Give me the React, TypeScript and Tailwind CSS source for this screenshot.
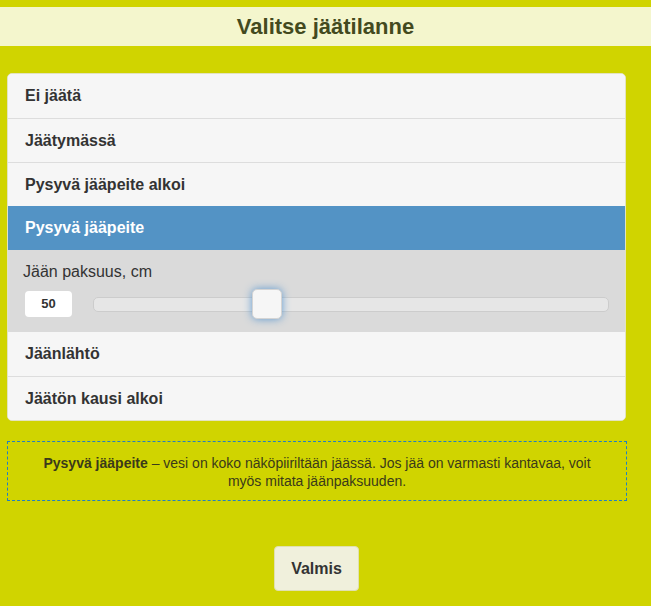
import { useState } from "react";

const options = [
  "Ei jäätä",
  "Jäätymässä",
  "Pysyvä jääpeite alkoi",
  "Pysyvä jääpeite",
  "Jäänlähtö",
  "Jäätön kausi alkoi",
];

export default function App() {
  const [selected, setSelected] = useState(3);
  const thickness = 50;

  return (
    <div className="min-h-[606px] bg-[#d0d400] pt-[7px] font-['Liberation_Sans',Arial,sans-serif] text-[#333]">
      {/* Header */}
      <div className="h-[39px] bg-[#f4f6cd] flex items-center justify-center">
        <h1 className="text-[22px] font-bold text-[#434a1e]">Valitse jäätilanne</h1>
      </div>

      <div className="px-[7px] pt-[27px] w-[633px]">
        {/* Options list */}
        <div className="w-[619px] rounded-[5px] overflow-hidden border border-[#e3e3c0] bg-[#f6f6f6]">
          {options.map((label, i) => (
            <div key={label}>
              <button
                onClick={() => setSelected(i)}
                className={
                  i === selected
                    ? "w-full h-[44px] flex items-center px-[17px] text-left text-[16px] font-bold bg-[#5393c5] text-white"
                    : "w-full h-[44px] flex items-center px-[17px] text-left text-[16px] font-bold bg-[#f6f6f6] text-[#333] " +
                      (i > 0 && i - 1 !== selected ? "border-t border-[#dddddd]" : "")
                }
              >
                {label}
              </button>
              {i === selected && (
                <div className="h-[82px] bg-[#dadada] px-[15px] pt-[10px]">
                  <div className="text-[16px] text-[#333]">Jään paksuus, cm</div>
                  <div className="flex items-center mt-[7px]">
                    <div className="w-[47px] h-[26px] ml-[2px] bg-white rounded-[4px] flex items-center justify-center text-[13px] font-bold">
                      {thickness}
                    </div>
                    <div className="relative ml-[21px] w-[516px] h-[15px] bg-[#e6e6e6] border border-[#cccccc] rounded-[5px]">
                      <div className="absolute left-[158px] top-[-9px] w-[30px] h-[30px] rounded-[5px] bg-[#f6f6f6] border border-[#d4d4d4] shadow-[0_0_8px_#5f9ad0]" />
                    </div>
                  </div>
                </div>
              )}
            </div>
          ))}
        </div>

        {/* Info box */}
        <div className="mt-[20px] w-[620px] h-[60px] border border-dashed border-[#1f7fc4] flex items-center justify-center px-[20px]">
          <p className="text-[14px] leading-[18px] text-center text-[#3a3a1a] pt-[2px]">
            <b>Pysyvä jääpeite</b> – vesi on koko näköpiiriltään jäässä. Jos jää on varmasti kantavaa, voit myös mitata jäänpaksuuden.
          </p>
        </div>

        {/* Done button */}
        <div className="w-[619px] flex justify-center mt-[45px]">
          <button className="w-[85px] h-[45px] rounded-[4px] bg-[#f0f0dc] border border-[#e0e0b0] text-[16px] font-bold text-[#333]">
            Valmis
          </button>
        </div>
      </div>
    </div>
  );
}
